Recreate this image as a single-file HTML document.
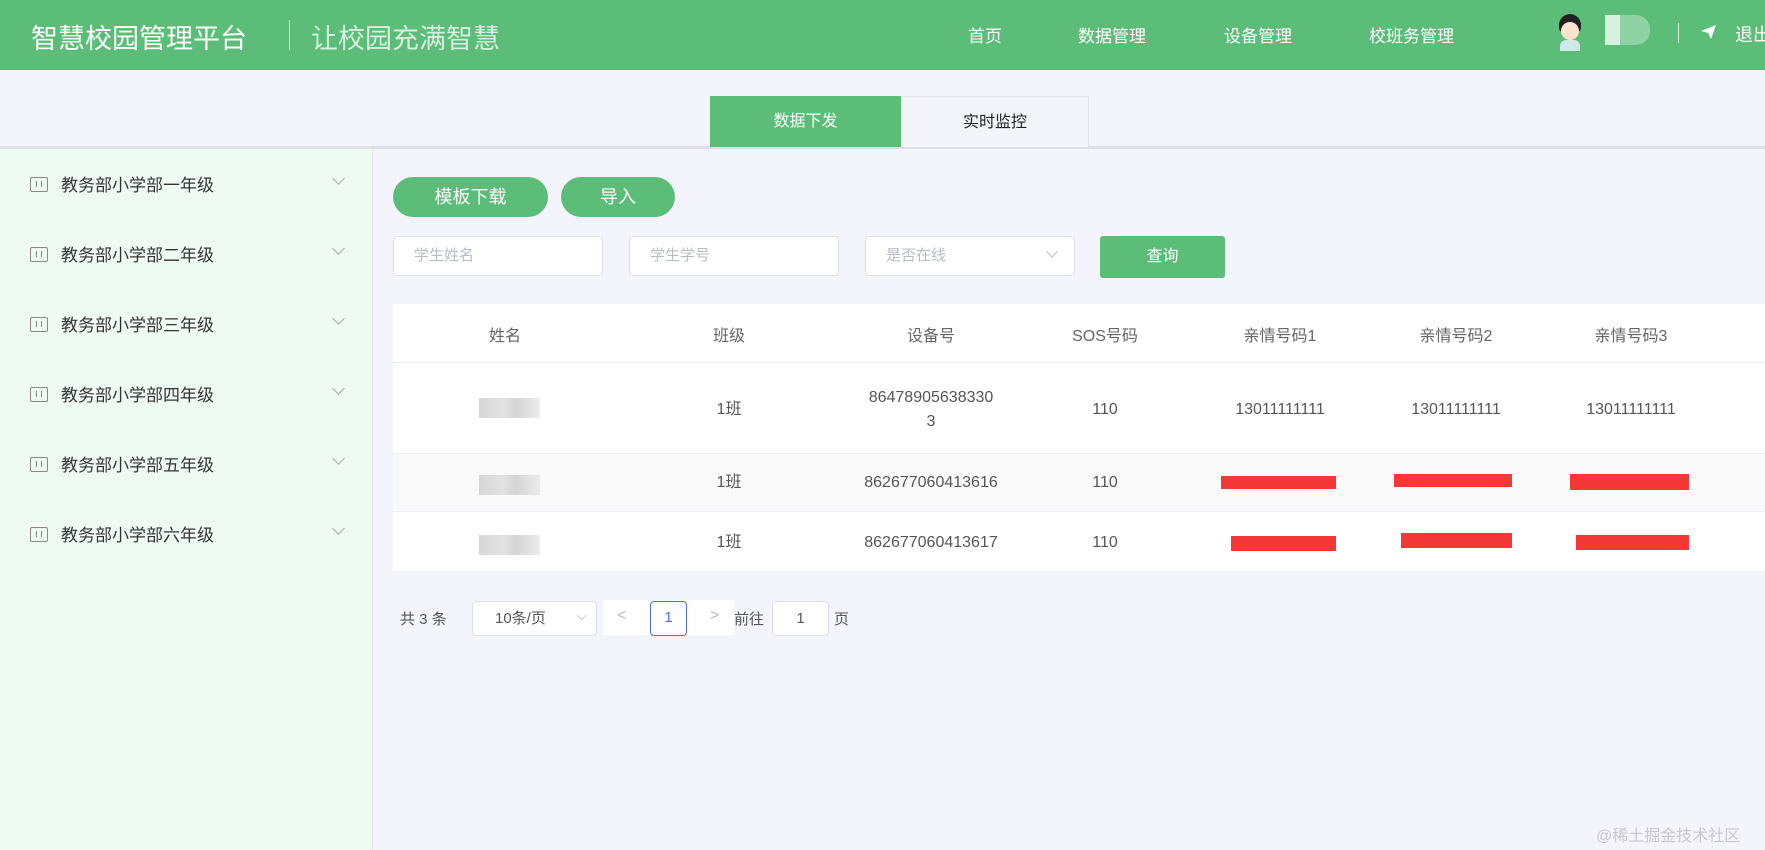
<!DOCTYPE html>
<html><head><meta charset="utf-8"><style>
*{margin:0;padding:0;box-sizing:border-box}
body{width:1765px;height:850px;overflow:hidden;background:#f3f4fc;font-family:"Liberation Sans","Noto Sans CJK SC",sans-serif;position:relative;color:#333}
.a{position:absolute}
.hdr{left:0;top:0;width:1765px;height:70px;background:#5bbd78}
.t{white-space:nowrap}
.nav{color:#fff;font-size:17px;top:22px}
.side{left:0;top:149px;width:373px;height:701px;background:#effaf3;border-right:1px solid #e4e8ec}
.si{left:30px;font-size:17px;color:#333;line-height:24px}
.si i{display:inline-block;width:18px;height:15px;border:1.5px solid #888;border-radius:2px;vertical-align:-1px;margin-right:13px;position:relative}
.si i:after{content:"";position:absolute;left:5px;top:3px;width:4px;height:6px;border-left:1.5px solid #888;border-right:1.5px solid #888}
.chev{left:334px;width:9px;height:9px;border-right:1.2px solid #aaa;border-bottom:1.2px solid #aaa;transform:rotate(45deg)}
.btn{background:#5bbd78;color:#fff;border-radius:20px;font-size:18px;text-align:center;line-height:40px;top:177px;height:40px}
.inp{top:236px;height:40px;background:#fff;border:1px solid #dcdfe6;border-radius:4px;font-size:15px;color:#b8bcc4;padding-left:20px;line-height:38px}
.tbl{left:393px;top:304px;width:1372px;height:268px;background:#fff}
.th{top:327px;font-size:16px;color:#666;transform:translateX(-50%);line-height:20px}
.td{font-size:16px;color:#555;transform:translateX(-50%);text-align:center;line-height:20px}
.red{background:#f43737;height:13px}
.blur{background:linear-gradient(90deg,#d6d6d6,#e2e2e2 40%,#d4d4d4 60%,#ececec);width:61px;height:20px}
</style></head><body>
<div class="a hdr"></div>
<div class="a t" style="left:31px;top:17px;font-size:27px;color:#fff">智慧校园管理平台</div>
<div class="a" style="left:289px;top:20px;width:1px;height:30px;background:#d9f0e0"></div>
<div class="a t" style="left:311px;top:17px;font-size:27px;color:#d8f0df">让校园充满智慧</div>
<div class="a t nav" style="left:968px">首页</div>
<div class="a t nav" style="left:1078px">数据管理</div>
<div class="a t nav" style="left:1224px">设备管理</div>
<div class="a t nav" style="left:1369px">校班务管理</div>
<div class="a" style="left:1557px;top:14px;width:26px;height:38px">
<div class="a" style="left:2px;top:0;width:22px;height:18px;background:#222;border-radius:11px 11px 4px 4px"></div>
<div class="a" style="left:4px;top:8px;width:18px;height:18px;background:#fbe3cf;border-radius:50%"></div>
<div class="a" style="left:3px;top:26px;width:20px;height:11px;background:#cfe8ea;border-radius:6px 6px 0 0"></div></div>
<div class="a" style="left:1605px;top:15px;width:45px;height:30px;background:#8fd3a5;border-radius:0 14px 14px 0"></div>
<div class="a" style="left:1605px;top:15px;width:15px;height:30px;background:#d8f2df"></div>
<div class="a" style="left:1678px;top:23px;width:1px;height:20px;background:#d0ecd8"></div>
<svg class="a" style="left:1701px;top:25px" width="16" height="15" viewBox="0 0 16 15"><path d="M0 6 L15 0 L10 14 L7 8 Z" fill="#fff"/></svg>
<div class="a t" style="left:1735px;top:21px;font-size:18px;color:#fff">退出</div>

<div class="a" style="left:0;top:146px;width:1765px;height:3px;background:#dfe0e5"></div>
<div class="a" style="left:710px;top:96px;width:191px;height:51px;background:#5bbd78;color:#fff;font-size:16px;text-align:center;line-height:51px">数据下发</div>
<div class="a" style="left:901px;top:96px;width:188px;height:51px;background:#f4f5fa;border:1px solid #e2e3e8;border-bottom:none;color:#222;font-size:16px;text-align:center;line-height:51px">实时监控</div>

<div class="a side"></div>
<div class="a t si" style="top:174px"><i></i>教务部小学部一年级</div>
<div class="a t si" style="top:244px"><i></i>教务部小学部二年级</div>
<div class="a t si" style="top:314px"><i></i>教务部小学部三年级</div>
<div class="a t si" style="top:384px"><i></i>教务部小学部四年级</div>
<div class="a t si" style="top:454px"><i></i>教务部小学部五年级</div>
<div class="a t si" style="top:524px"><i></i>教务部小学部六年级</div>
<div class="a chev" style="top:174px"></div><div class="a chev" style="top:244px"></div><div class="a chev" style="top:314px"></div><div class="a chev" style="top:384px"></div><div class="a chev" style="top:454px"></div><div class="a chev" style="top:524px"></div>

<div class="a btn" style="left:393px;width:155px">模板下载</div>
<div class="a btn" style="left:561px;width:114px">导入</div>
<div class="a inp" style="left:393px;width:210px">学生姓名</div>
<div class="a inp" style="left:629px;width:210px">学生学号</div>
<div class="a inp" style="left:865px;width:210px">是否在线</div>
<div class="a" style="left:1048px;top:248px;width:8px;height:8px;border-right:1px solid #bbb;border-bottom:1px solid #bbb;transform:rotate(45deg)"></div>
<div class="a" style="left:1100px;top:236px;width:125px;height:42px;background:#5bbd78;color:#fff;font-size:16px;text-align:center;line-height:42px;border-radius:3px">查询</div>

<div class="a tbl"></div>
<div class="a" style="left:393px;top:362px;width:1372px;height:1px;background:#ebeef5"></div>
<div class="a" style="left:393px;top:453px;width:1372px;height:59px;background:#fafafa;border-top:1px solid #ebeef5;border-bottom:1px solid #ebeef5"></div>
<div class="a" style="left:393px;top:571px;width:1372px;height:1px;background:#ebeef5"></div>
<div class="a t th" style="left:505px">姓名</div>
<div class="a t th" style="left:729px">班级</div>
<div class="a t th" style="left:931px">设备号</div>
<div class="a t th" style="left:1105px">SOS号码</div>
<div class="a t th" style="left:1280px">亲情号码1</div>
<div class="a t th" style="left:1456px">亲情号码2</div>
<div class="a t th" style="left:1631px">亲情号码3</div>

<div class="a blur" style="left:479px;top:398px"></div>
<div class="a t td" style="left:729px;top:400px">1班</div>
<div class="a td" style="left:931px;top:386px;line-height:24px">86478905638330<br>3</div>
<div class="a t td" style="left:1105px;top:400px">110</div>
<div class="a t td" style="left:1280px;top:400px">13011111111</div>
<div class="a t td" style="left:1456px;top:400px">13011111111</div>
<div class="a t td" style="left:1631px;top:400px">13011111111</div>

<div class="a blur" style="left:479px;top:475px"></div>
<div class="a t td" style="left:729px;top:473px">1班</div>
<div class="a t td" style="left:931px;top:473px">862677060413616</div>
<div class="a t td" style="left:1105px;top:473px">110</div>
<div class="a red" style="left:1221px;top:476px;width:115px"></div>
<div class="a red" style="left:1394px;top:474px;width:118px"></div>
<div class="a red" style="left:1570px;top:474px;width:119px;height:16px"></div>

<div class="a blur" style="left:479px;top:535px"></div>
<div class="a t td" style="left:729px;top:533px">1班</div>
<div class="a t td" style="left:931px;top:533px">862677060413617</div>
<div class="a t td" style="left:1105px;top:533px">110</div>
<div class="a red" style="left:1231px;top:536px;width:105px;height:15px"></div>
<div class="a red" style="left:1401px;top:533px;width:111px;height:15px"></div>
<div class="a red" style="left:1576px;top:535px;width:113px;height:15px"></div>

<div class="a t" style="left:400px;top:608px;font-size:15px;color:#555">共 3 条</div>
<div class="a" style="left:472px;top:601px;width:125px;height:35px;background:#fff;border:1px solid #dcdfe6;border-radius:4px;font-size:15px;color:#555;padding-left:22px;line-height:33px">10条/页</div>
<div class="a" style="left:578px;top:612px;width:7px;height:7px;border-right:1px solid #ccc;border-bottom:1px solid #ccc;transform:rotate(45deg)"></div>
<div class="a" style="left:603px;top:600px;width:131px;height:35px;background:#fff"></div>
<div class="a t" style="left:617px;top:607px;color:#bbb;font-size:16px">&lt;</div>
<div class="a" style="left:650px;top:601px;width:37px;height:35px;border:1.5px solid #4c6fde;border-radius:4px;color:#4c6fde;font-size:15px;text-align:center;line-height:32px;background:#fff">1</div>
<div class="a t" style="left:710px;top:607px;color:#bbb;font-size:16px">&gt;</div>
<div class="a t" style="left:734px;top:608px;font-size:15px;color:#555">前往</div>
<div class="a" style="left:772px;top:601px;width:57px;height:35px;background:#fff;border:1px solid #dcdfe6;border-radius:4px;font-size:15px;color:#555;text-align:center;line-height:33px">1</div>
<div class="a t" style="left:834px;top:608px;font-size:15px;color:#555">页</div>
<div class="a t" style="left:1596px;top:822px;font-size:16px;color:#c8c8d0">@稀土掘金技术社区</div>
</body></html>
